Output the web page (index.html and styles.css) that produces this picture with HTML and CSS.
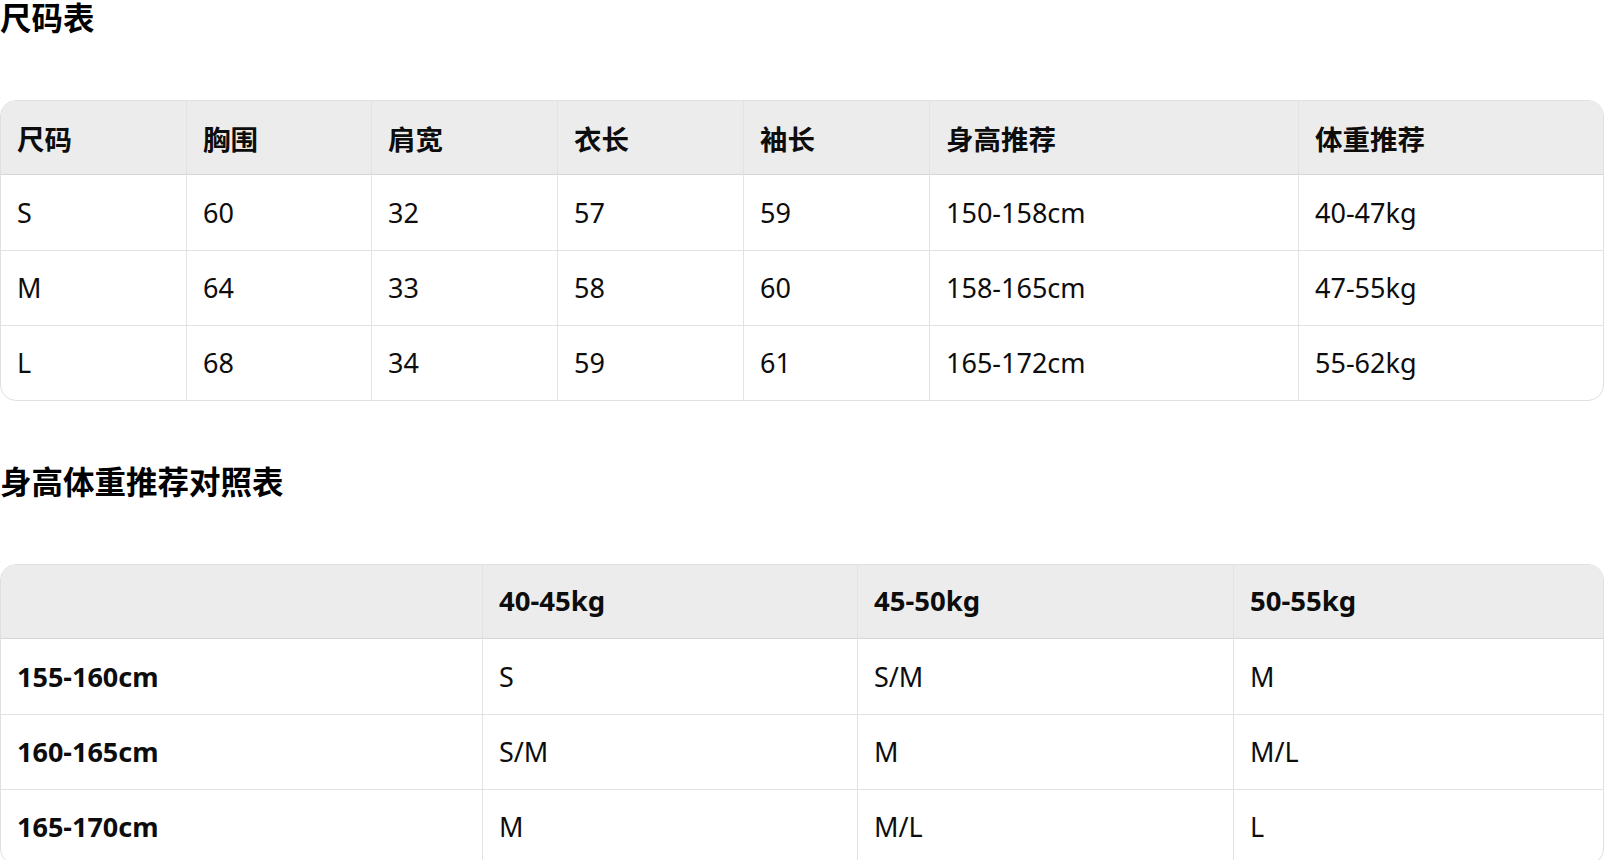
FILE: index.html
```html
<!DOCTYPE html>
<html lang="zh-CN">
<head>
<meta charset="utf-8">
<title>尺码表</title>
<link rel="stylesheet" href="styles.css">
</head>
<body>
<main class="page">
  <h3 class="title">尺码表</h3>
  <div class="table-wrap">
    <table class="grid">
      <colgroup>
        <col class="c185"><col class="c185"><col class="c186"><col class="c186"><col class="c186"><col class="c369"><col class="c305">
      </colgroup>
      <thead class="head-cjk">
        <tr><th>尺码</th><th>胸围</th><th>肩宽</th><th>衣长</th><th>袖长</th><th>身高推荐</th><th>体重推荐</th></tr>
      </thead>
      <tbody>
        <tr><td>S</td><td>60</td><td>32</td><td>57</td><td>59</td><td>150-158cm</td><td>40-47kg</td></tr>
        <tr><td>M</td><td>64</td><td>33</td><td>58</td><td>60</td><td>158-165cm</td><td>47-55kg</td></tr>
        <tr><td>L</td><td>68</td><td>34</td><td>59</td><td>61</td><td>165-172cm</td><td>55-62kg</td></tr>
      </tbody>
    </table>
  </div>

  <h3 class="title">身高体重推荐对照表</h3>
  <div class="table-wrap">
    <table class="grid">
      <colgroup>
        <col class="c481"><col class="c375"><col class="c376"><col class="c370">
      </colgroup>
      <thead>
        <tr><th></th><th>40-45kg</th><th>45-50kg</th><th>50-55kg</th></tr>
      </thead>
      <tbody>
        <tr><td class="strong">155-160cm</td><td>S</td><td>S/M</td><td>M</td></tr>
        <tr><td class="strong">160-165cm</td><td>S/M</td><td>M</td><td>M/L</td></tr>
        <tr><td class="strong">165-170cm</td><td>M</td><td>M/L</td><td>L</td></tr>
      </tbody>
    </table>
  </div>
</main>
</body>
</html>
```

FILE: styles.css
```css
* {
  box-sizing: border-box;
}

html, body {
  margin: 0;
  padding: 0;
  background: #ffffff;
}

body {
  font-family: "Noto Sans", "Noto Sans CJK SC", sans-serif;
  color: #0d0d0d;
  font-size: 27px;
}

.page {
  display: flex;
  flex-direction: column;
}

.title {
  margin: 0 0 68px 0;
  font-size: 31.5px;
  line-height: 32px;
  font-weight: 700;
  color: #000;
  font-family: "Noto Sans CJK SC", "Noto Sans", sans-serif;
}

.table-wrap {
  margin-bottom: 63px;
}

.grid {
  width: 100%;
  table-layout: fixed;
  border-collapse: separate;
  border-spacing: 0;
  border: 1px solid #e0e0e0;
  border-radius: 16px;
  overflow: hidden;
}

.c185 { width: 185px; }
.c186 { width: 186px; }
.c369 { width: 369px; }
.c305 { width: 305px; }
.c481 { width: 481px; }
.c375 { width: 375px; }
.c376 { width: 376px; }
.c370 { width: 370px; }

.grid th,
.grid td {
  height: 75px;
  padding: 0 16px;
  text-align: left;
  vertical-align: middle;
  white-space: nowrap;
  border-left: 1px solid #e3e3e3;
  border-top: 1px solid #e3e3e3;
  line-height: 1.4;
}

.grid th:first-child,
.grid td:first-child {
  border-left: none;
}

.grid thead th {
  border-top: none;
  background: #ececec;
  font-weight: 700;
  font-size: 27.5px;
  height: 74px;
  border-bottom: 1px solid #d6d6d6;
}

.grid .head-cjk th {
  padding-top: 5px;
}

.grid tbody tr:first-child td {
  border-top: none;
}

.strong {
  font-weight: 700;
}
```
